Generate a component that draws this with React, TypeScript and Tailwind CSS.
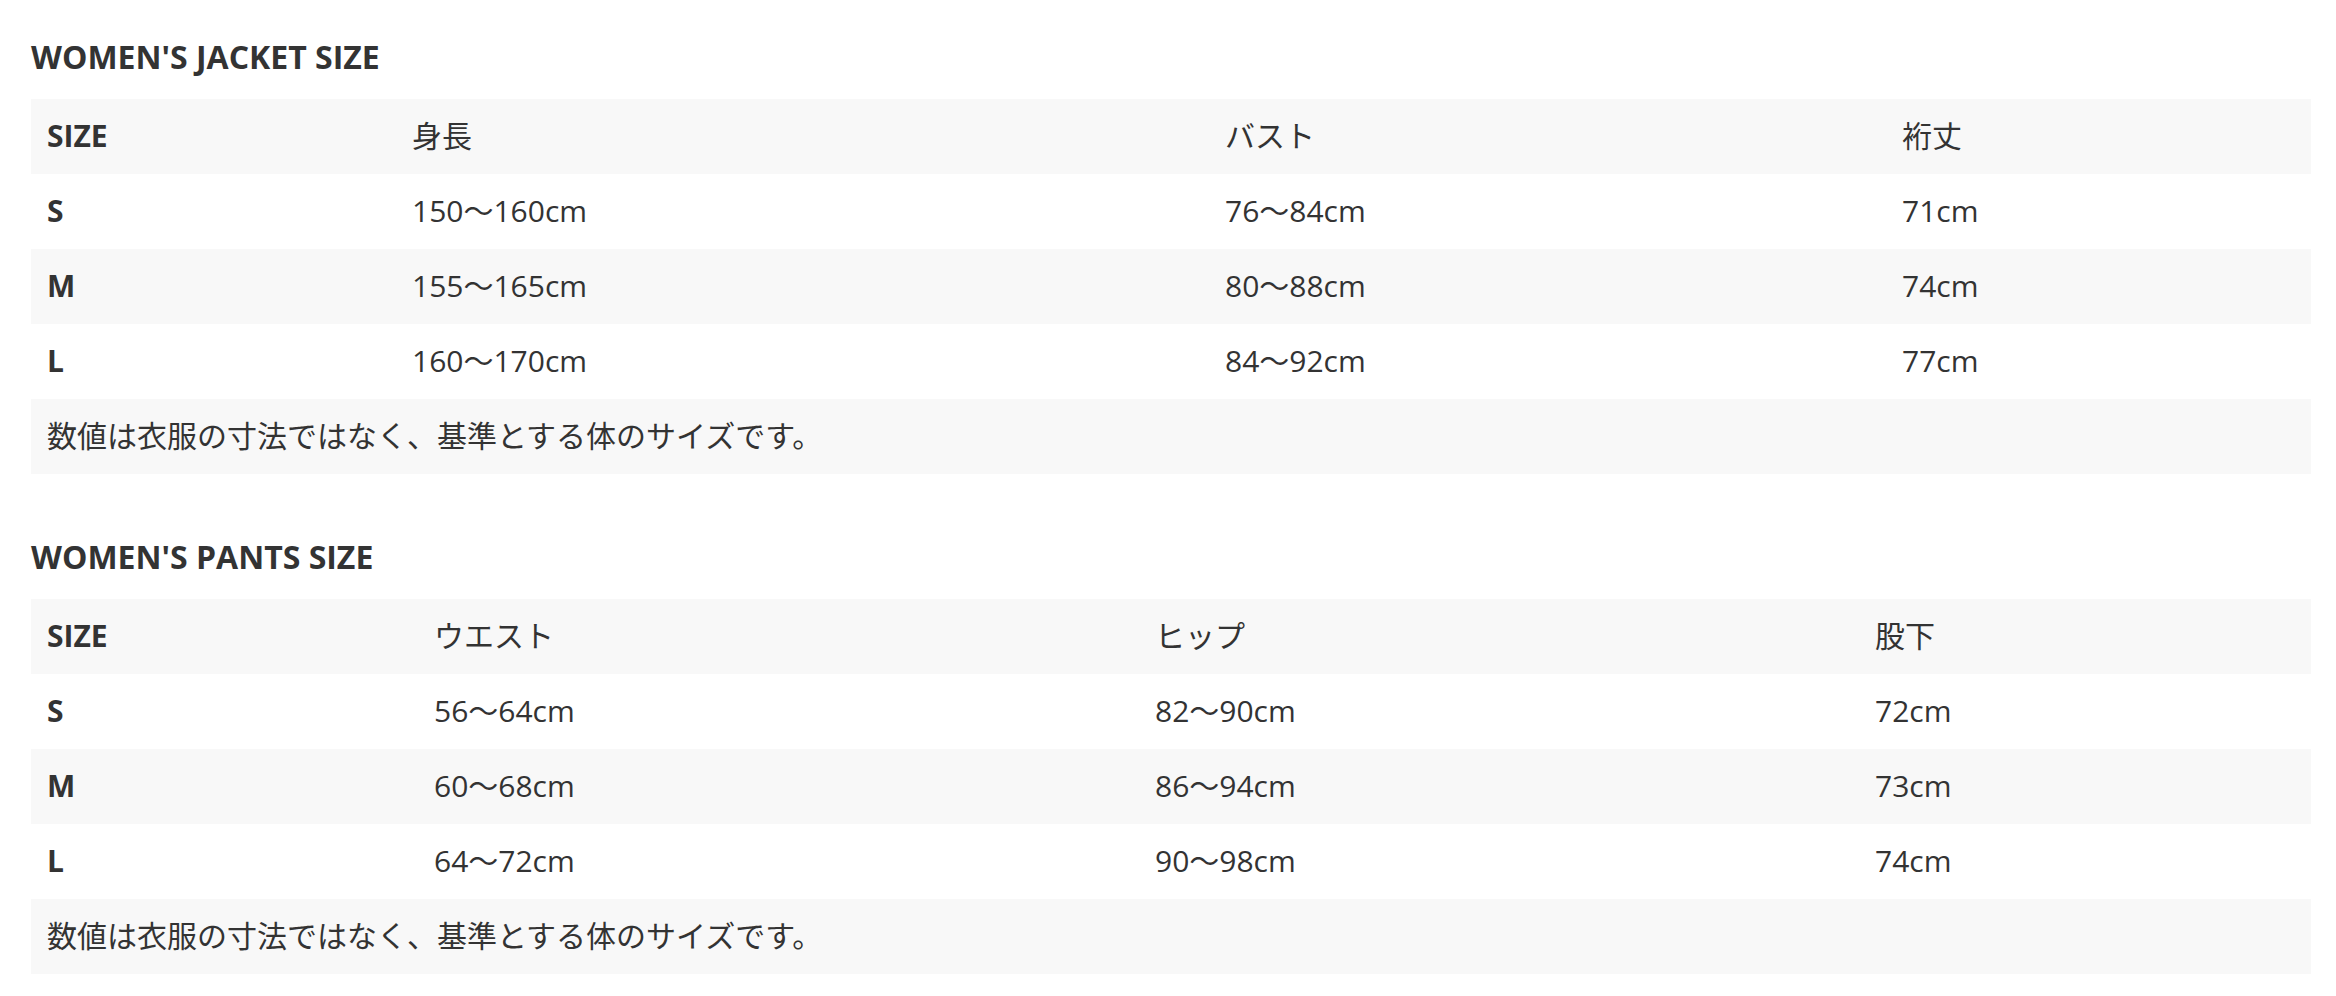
const jacket = {
  title: "WOMEN'S JACKET SIZE",
  widths: ["w-[365px]", "w-[813px]", "w-[677px]", "w-[425px]"],
  head: ["SIZE", "身長", "バスト", "裄丈"],
  rows: [
    ["S", "150〜160cm", "76〜84cm", "71cm"],
    ["M", "155〜165cm", "80〜88cm", "74cm"],
    ["L", "160〜170cm", "84〜92cm", "77cm"],
  ],
};

const pants = {
  title: "WOMEN'S PANTS SIZE",
  widths: ["w-[387px]", "w-[721px]", "w-[720px]", "w-[452px]"],
  head: ["SIZE", "ウエスト", "ヒップ", "股下"],
  rows: [
    ["S", "56〜64cm", "82〜90cm", "72cm"],
    ["M", "60〜68cm", "86〜94cm", "73cm"],
    ["L", "64〜72cm", "90〜98cm", "74cm"],
  ],
};

const note = "数値は衣服の寸法ではなく、基準とする体のサイズです。";

type Chart = typeof jacket;

const SizeTable = ({ chart, className }: { chart: Chart; className?: string }) => {
  return (
    <section className={className}>
      <h2 className="text-[32px] leading-[45px] font-bold mb-[20px]">{chart.title}</h2>
      <table className="table-fixed w-[2280px] border-collapse">
        <thead>
          <tr className="bg-[#f8f8f8] h-[75px]">
            {chart.head.map((h, i) => (
              <th
                key={h}
                className={`${chart.widths[i]} px-[16px] pt-[14px] pb-[16px] text-left align-middle ${i === 0 ? "font-bold" : "font-normal"}`}
              >
                {h}
              </th>
            ))}
          </tr>
        </thead>
        <tbody>
          {chart.rows.map((row, r) => (
            <tr key={row[0]} className={`h-[75px] ${r % 2 === 1 ? "bg-[#f8f8f8]" : "bg-white"}`}>
              {row.map((cell, i) => (
                <td key={i} className={`px-[16px] pt-[14px] pb-[16px] align-middle ${i === 0 ? "font-bold" : ""}`}>
                  {cell}
                </td>
              ))}
            </tr>
          ))}
          <tr className="bg-[#f8f8f8] h-[75px]">
            <td colSpan={4} className="px-[16px] pt-[14px] pb-[16px] align-middle">
              {note}
            </td>
          </tr>
        </tbody>
      </table>
    </section>
  );
};

const App = () => {
  return (
    <div className="min-h-screen bg-white pt-[34px] pl-[31px] text-[#333] text-[30px] leading-[45px] font-['Open_Sans','Noto_Sans_CJK_JP',sans-serif]">
      <SizeTable chart={jacket} />
      <SizeTable chart={pants} className="mt-[60px]" />
    </div>
  );
};

export default App;
